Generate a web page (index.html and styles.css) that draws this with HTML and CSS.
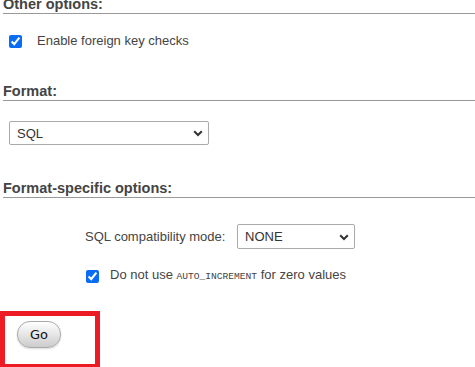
FILE: index.html
```html
<!DOCTYPE html>
<html lang="en">
<head>
  <meta charset="UTF-8">
  <title>Export options</title>
  <link rel="stylesheet" href="styles.css">
</head>
<body>
  <div class="page">
    <h3 class="first">Other options:</h3>
    <label class="opt top-opt">
      <input type="checkbox" checked>
      <span>Enable foreign key checks</span>
    </label>

    <h3 class="format-head">Format:</h3>
    <div class="select-wrap fmt">
      <select>
        <option>SQL</option>
      </select>
      <svg class="chev" width="10" height="7" viewBox="0 0 10 7"><path d="M1.2 1.2 5 5 8.8 1.2" fill="none" stroke="#333" stroke-width="2"/></svg>
    </div>

    <h3 class="spec-head">Format-specific options:</h3>
    <div class="compat">
      <span class="compat-label">SQL compatibility mode:</span>
      <div class="select-wrap mode">
        <select>
          <option>NONE</option>
        </select>
        <svg class="chev" width="10" height="7" viewBox="0 0 10 7"><path d="M1.2 1.2 5 5 8.8 1.2" fill="none" stroke="#333" stroke-width="2"/></svg>
      </div>
    </div>
    <label class="opt sub-opt">
      <input type="checkbox" checked>
      <span>Do not use <code>AUTO_INCREMENT</code> for zero values</span>
    </label>

    <div class="go-box">
      <button class="go">Go</button>
    </div>
  </div>
</body>
</html>
```

FILE: styles.css
```css
body {
  margin: 0;
  font-family: 'Liberation Sans', Arial, sans-serif;
  font-size: 13px;
  color: #444;
  background: white;
}
.page {
  overflow: hidden;
  height: 367px;
}
h3 {
  margin: 0 0 0 3px;
  font-size: 14.5px;
  line-height: 17px;
  font-weight: bold;
  color: #444;
  border-bottom: 1px solid #999;
}
h3.first {
  margin-top: -4px;
}
.opt {
  display: flex;
  align-items: center;
  line-height: 16px;
}
.opt input {
  width: 13px;
  height: 13px;
  margin: 0;
  accent-color: #0a6cf5;
}
.top-opt {
  margin: 19px 0 0 9px;
  gap: 15px;
}
.format-head {
  margin-top: 34px;
}
.select-wrap {
  position: relative;
  display: inline-block;
}
.select-wrap select {
  appearance: none;
  -webkit-appearance: none;
  font-family: 'Liberation Sans', Arial, sans-serif;
  font-size: 13px;
  color: #333;
  background: white;
  border: 1px solid #aaa;
  border-radius: 2px;
  padding: 0 0 0 7px;
  margin: 0;
}
.chev {
  position: absolute;
  right: 6px;
  top: 50%;
  margin-top: -3px;
}
.fmt {
  margin: 20px 0 0 9px;
}
.fmt select {
  width: 200px;
  height: 24px;
}
.spec-head {
  margin-top: 35px;
}
.compat {
  display: flex;
  align-items: center;
  margin: 26px 0 0 85px;
}
.compat-label {
  width: 152px;
}
.mode select {
  width: 118px;
  height: 25px;
}
.sub-opt {
  margin: 18px 0 0 86px;
  gap: 11px;
}
code {
  font-family: 'Liberation Mono', 'Courier New', monospace;
  font-size: 9.6px;
}
.go-box {
  margin-top: 26px;
  width: 78px;
  height: 43px;
  border: 5px solid #ed1c24;
  padding: 5px 0 0 12px;
  box-sizing: content-box;
}
.go {
  width: 44px;
  height: 27px;
  margin: 0;
  padding: 0;
  font-family: 'DejaVu Sans', Tahoma, sans-serif;
  font-size: 13px;
  color: #111;
  border: 1px solid #aaa;
  border-radius: 13px;
  background: linear-gradient(#fff, #ccc);
  box-shadow: 0 1px 2px rgba(0, 0, 0, 0.15);
  cursor: pointer;
}
```
